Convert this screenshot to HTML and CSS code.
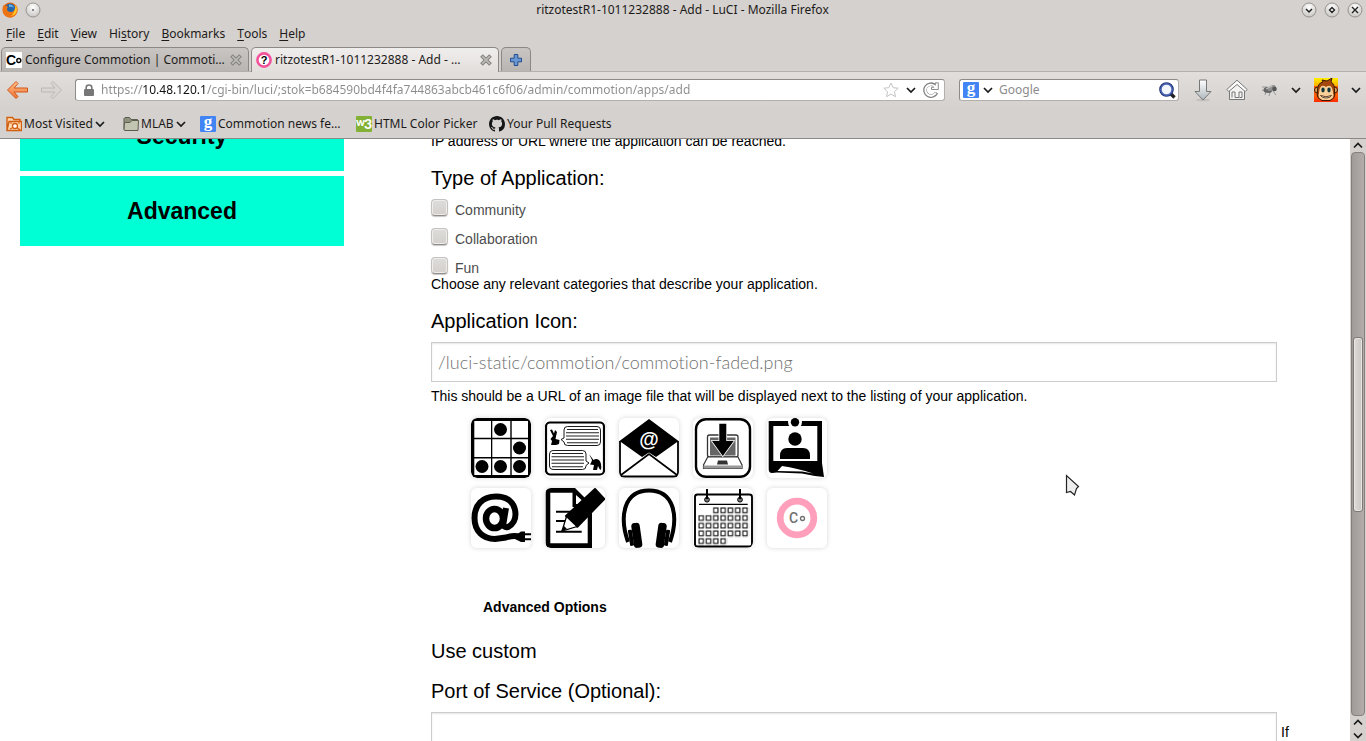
FILE: index.html
```
<!DOCTYPE html>
<html lang="en">
<head>
<meta charset="utf-8">
<title>ritzotestR1-1011232888 - Add - LuCI</title>
<link rel="stylesheet" href="styles.css">
</head>
<body>
<svg class="defs" aria-hidden="true">
  <defs>
    <radialGradient id="orb" cx=".5" cy=".3" r=".7"><stop offset="0" stop-color="#fff"/><stop offset="1" stop-color="#c9c6c3"/></radialGradient>
    <linearGradient id="orange" x2="0" y2="1"><stop offset="0" stop-color="#ffc08a"/><stop offset="1" stop-color="#f07030"/></linearGradient>
    <linearGradient id="silver" x2="0" y2="1"><stop offset="0" stop-color="#fff"/><stop offset="1" stop-color="#aeb6bb"/></linearGradient>
    <linearGradient id="flame" x2="0" y2="1"><stop offset="0" stop-color="#ffef00"/><stop offset="1" stop-color="#ff2a00"/></linearGradient>
    <pattern id="days" x="5" y="19" width="7.3" height="7.7" patternUnits="userSpaceOnUse"><rect x="1" y="1" width="4.4" height="4.6" fill="#fff" stroke="#111" stroke-width="1.1"/></pattern>
    <symbol id="chev" viewBox="0 0 10 10"><path d="M1 3 5 7 9 3" fill="none" stroke="#1a1a1a" stroke-width="1.7"/></symbol>
    <symbol id="cross" viewBox="0 0 12 12"><path d="M1.500 1.500 10.500 10.500M10.500 1.500 1.500 10.500" stroke="#82807d" stroke-width="3.800"/><path d="M2.100 2.100 9.900 9.900M9.900 2.100 2.100 9.900" stroke="#bdbab7" stroke-width="1.600"/></symbol>
    <symbol id="goog" viewBox="0 0 16 16"><rect width="16" height="16" rx="1" fill="#4284f4"/><text x="8" y="11" text-anchor="middle" font-family="Liberation Serif, serif" font-weight="bold" font-size="17" fill="#fff">g</text></symbol>
  </defs>
</svg>
<div class="window">
  <header class="chrome">
    <div class="titlebar">
      <div class="title-left">
        <svg width="16" height="16" viewBox="0 0 16 16"><circle cx="8" cy="8" r="7.400" fill="#e8640c"/><circle cx="8.200" cy="6.600" r="5.200" fill="#2467ab"/><path d="M7 2.500Q11 2 12 6Q10 4 7 5z" fill="#65b4e8"/><path d="M1 4Q2 2 3 4Q4 3.600 6 4.500L5 7Q5 10 9 10Q12 10 13.200 6Q14.500 3 13 1.800Q17 6 15 11Q12 16 7 15.400Q1 14 .6 9Q.5 6 1 4z" fill="#ed7412"/><path d="M13.500 3Q16 7 14 11Q12 14 9 14Q13 11 13.500 3z" fill="#ffc928"/></svg>
        <svg width="16" height="16" viewBox="0 0 16 16"><circle cx="8" cy="8" r="7" fill="url(#orb)" stroke="#8f8c89" stroke-width=".9"/><circle cx="8" cy="8" r=".9" fill="#555"/></svg>
      </div>
      <div class="title-text">ritzotestR1-1011232888 - Add - LuCI - Mozilla Firefox</div>
      <div class="title-right">
        <button class="plain" aria-label="Minimize"><svg width="16" height="16" viewBox="0 0 16 16"><circle cx="8" cy="8" r="7" fill="url(#orb)" stroke="#8f8c89" stroke-width=".9"/><path d="M5 7 8 10 11 7" fill="none" stroke="#222" stroke-width="1.500"/></svg></button>
        <button class="plain" aria-label="Maximize"><svg width="16" height="16" viewBox="0 0 16 16"><circle cx="8" cy="8" r="7" fill="url(#orb)" stroke="#8f8c89" stroke-width=".9"/><path d="M8 5.500 10.500 8 8 10.500 5.500 8z" fill="none" stroke="#222" stroke-width="1.400"/></svg></button>
        <button class="plain" aria-label="Close"><svg width="16" height="16" viewBox="0 0 16 16"><circle cx="8" cy="8" r="7" fill="url(#orb)" stroke="#8f8c89" stroke-width=".9"/><path d="M5 5 11 11M11 5 5 11" stroke="#222" stroke-width="1.400"/></svg></button>
      </div>
    </div>
    <nav class="menubar">
      <button class="plain"><u>F</u>ile</button>
      <button class="plain"><u>E</u>dit</button>
      <button class="plain"><u>V</u>iew</button>
      <button class="plain">Hi<u>s</u>tory</button>
      <button class="plain"><u>B</u>ookmarks</button>
      <button class="plain"><u>T</u>ools</button>
      <button class="plain"><u>H</u>elp</button>
    </nav>
    <div class="tabs">
      <div class="tab">
        <svg width="16" height="16" viewBox="0 0 16 16"><rect width="16" height="16" fill="#fff"/><text x="0" y="13" font-family="Liberation Sans, sans-serif" font-weight="bold" font-size="14">C</text><circle cx="12.800" cy="8.500" r="2" fill="#fff" stroke="#000" stroke-width="1.400"/></svg>
        <span class="tab-name">Configure Commotion | Commoti…</span>
        <button class="plain" aria-label="Close tab"><svg width="12" height="12"><use href="#cross"/></svg></button>
      </div>
      <div class="tab active">
        <svg width="16" height="16" viewBox="0 0 16 16"><circle cx="8" cy="8" r="6.600" fill="#fff" stroke="#f4529a" stroke-width="2.600"/><text x="8" y="12" text-anchor="middle" font-family="Liberation Sans, sans-serif" font-weight="bold" font-size="11">?</text></svg>
        <span class="tab-name">ritzotestR1-1011232888 - Add - …</span>
        <button class="plain" aria-label="Close tab"><svg width="12" height="12"><use href="#cross"/></svg></button>
      </div>
      <button class="newtab" aria-label="New tab"><svg width="12" height="12" viewBox="0 0 12 12"><path d="M4.200 .5h3.600v3.700h3.700v3.600H7.800v3.700H4.200V7.800H.5V4.200h3.700z" fill="#6a97d2" stroke="#204d90"/></svg></button>
    </div>
    <div class="toolbar">
      <div class="history">
        <button class="plain" aria-label="Back"><svg width="23" height="20" viewBox="0 0 23 20"><path d="M10 1.500 1.500 10 10 18.500 12 16.500 8 12H21.500V8H8L12 3.500z" fill="url(#orange)" stroke="#d0581c" stroke-linejoin="round"/></svg></button>
        <button class="plain" aria-label="Forward"><svg width="23" height="20" viewBox="0 0 23 20"><path d="M13 1.500 21.500 10 13 18.500 11 16.500 15 12H1.500V8H15L11 3.500z" fill="#d8d5d2" stroke="#bbb8b5" stroke-linejoin="round"/></svg></button>
      </div>
      <div class="box urlbox">
        <svg width="10" height="12" viewBox="0 0 10 12"><path d="M2.200 6V3.500a2.800 2.500 0 0 1 5.600 0V6" fill="none" stroke="#777" stroke-width="1.600"/><rect y="5" width="10" height="7" rx="1" fill="#777"/></svg>
        <input class="url" type="text" aria-label="Address" value="https://10.48.120.1/cgi-bin/luci/;stok=b684590bd4f4fa744863abcb461c6f06/admin/commotion/apps/add">
        <svg width="16" height="16" viewBox="0 0 16 16"><path d="M8 1 10.100 5.700 15.200 6.200 11.400 9.600 12.500 14.700 8 12 3.500 14.700 4.600 9.600 .8 6.200 5.900 5.700z" fill="#fff" stroke="#c4c4c4" stroke-linejoin="round"/></svg>
        <svg width="10" height="10"><use href="#chev"/></svg>
        <button class="plain" aria-label="Reload"><svg width="16" height="16" viewBox="0 0 16 16"><path d="M13.500 10.500A6 6 0 1 1 11.800 3.500" fill="none" stroke="#808080" stroke-width="3.600"/><path d="M15.300 .8V7.500H8.500V5.200H11L12.300 3.300V.8z" fill="#fff" stroke="#808080" stroke-width=".9"/><path d="M12.800 10.700A5.500 5.500 0 1 1 11.500 4L13 5.500" fill="none" stroke="#fff" stroke-width="1.900"/></svg></button>
      </div>
      <div class="box searchbox">
        <svg width="16" height="16"><use href="#goog"/></svg>
        <svg width="10" height="10"><use href="#chev"/></svg>
        <input class="search" type="text" aria-label="Search" placeholder="Google">
        <svg width="17" height="17" viewBox="0 0 17 17"><path d="M10.500 10.500 15.500 15.500" stroke="#222" stroke-width="3.400"/><circle cx="7.500" cy="7.500" r="5.600" fill="#fff" stroke="#1c2c70" stroke-width="3.400"/><circle cx="7.500" cy="7.500" r="5.600" fill="#f2f5fc" stroke="#4a66b8" stroke-width="1.600"/></svg>
      </div>
      <div class="actions">
        <button class="plain" aria-label="Downloads"><svg width="20" height="23" viewBox="0 0 20 23"><ellipse cx="10" cy="21" rx="7" ry="1.500" fill="#c3c0bd"/><path d="M6.500 1h7v11.500h4.500L10 21 2 12.500h4.500z" fill="url(#silver)" stroke="#777" stroke-linejoin="round"/></svg></button>
        <button class="plain" aria-label="Home"><svg width="22" height="22" viewBox="0 0 22 22"><path d="M3.500 11V20.500H18.500V11L11 4.500z" fill="#f4f3f2" stroke="#777"/><path d="M11 1.200 .8 10.500 2.800 12.500 11 5.500 19.200 12.500 21.200 10.500z" fill="#fbfbfb" stroke="#777" stroke-linejoin="round"/><path d="M6 18.500V13h3v5.500h4V13h3v5.500h-2.500" fill="none" stroke="#777"/></svg></button>
        <button class="plain" aria-label="Firebug"><svg width="17" height="14" viewBox="0 0 17 14"><path d="M1 4H6L4 12M1 7 5 8M9 9 8 13M12 8 15 12" fill="none" stroke="#999"/><ellipse cx="7" cy="7" rx="4.500" ry="3" fill="#666"/><ellipse cx="10.500" cy="5" rx="4.500" ry="2.500" fill="#929292" transform="rotate(-20 10.500 5)"/><circle cx="13.500" cy="6" r="2.300" fill="#555"/><path d="M5 6 11 3" stroke="#ccc"/></svg></button>
        <svg width="10" height="10"><use href="#chev"/></svg>
        <button class="plain" aria-label="Greasemonkey"><svg width="24" height="24" viewBox="0 0 24 24"><rect width="24" height="24" fill="url(#flame)"/><path d="M0 8H5V17H0M20 8H24V17H20" fill="#ff5a00"/><circle cx="3.500" cy="12" r="3" fill="#dd9c50" stroke="#3a1804"/><circle cx="20.500" cy="12" r="3" fill="#dd9c50" stroke="#3a1804"/><path d="M3.500 14Q3 5 9 4L8 2 13 3 18 0 17 4Q21 6 20.500 14Q22 20 16 22.500H8Q2 20 3.500 14z" fill="#a4480c" stroke="#3a1804"/><path d="M6 10Q8 6 12 9Q16 6 18 10Q19 13 19 15Q21 20 15.500 22H8.500Q3 20 5 15Q5 12 6 10z" fill="#f7d097"/><ellipse cx="9" cy="12" rx="1.700" ry="2.400" fill="#10343c"/><ellipse cx="15" cy="12" rx="1.700" ry="2.400" fill="#10343c"/><path d="M6.500 17.500Q12 20 17.500 17.500Q16 20 12 20Q8 20 6.500 17.500z" fill="#fff" stroke="#3a1804" stroke-width=".8"/></svg></button>
        <svg width="10" height="10"><use href="#chev"/></svg>
      </div>
    </div>
    <div class="bookmarks">
      <button class="plain mark"><svg width="16" height="16" viewBox="0 0 16 16"><path d="M1 14.500V1.500H6.500L8 3.500H14V6M1 14.500 3 5.500H15.500V14.500z" fill="#ffd9ad" stroke="#d25f10" stroke-width="1.400"/><circle cx="9" cy="10" r="2.500" fill="#fff" stroke="#d25f10" stroke-width="1.300"/><path d="M4 13 7 11.500M11 11.500 14 14M4 7H6M12 7H14" stroke="#d25f10" stroke-width="1.200"/></svg><span>Most Visited</span><svg width="10" height="10"><use href="#chev"/></svg></button>
      <button class="plain mark"><svg width="16" height="16" viewBox="0 0 16 16"><path d="M1 13.500V2.500L2 1.500H6.500L8 3.500H14.500V5" fill="#8d927c" stroke="#5c5d4e"/><path d="M1 14 1.500 6.500H7L9 4.500H15.500L15 14.500H1.500z" fill="#c2c5b2" stroke="#5c5d4e"/></svg><span>MLAB</span><svg width="10" height="10"><use href="#chev"/></svg></button>
      <a class="mark" href="#"><svg width="16" height="16"><use href="#goog"/></svg><span>Commotion news fe…</span></a>
      <a class="mark" href="#"><svg width="16" height="16" viewBox="0 0 16 16"><rect width="16" height="16" rx="1" fill="#83b135"/><text x="0" y="10" font-family="Lato, sans-serif" font-weight="900" font-size="11" fill="#fff">w</text><text x="8" y="13" font-family="Lato, sans-serif" font-weight="900" font-size="14" fill="#fff">3</text></svg><span>HTML Color Picker</span></a>
      <a class="mark" href="#"><svg width="16" height="16" viewBox="0 0 16 16"><path fill="#161616" d="M8 0C3.580 0 0 3.580 0 8c0 3.540 2.290 6.530 5.470 7.590.4.070.55-.17.55-.38 0-.19-.01-.82-.01-1.490-2.010.37-2.530-.49-2.690-.94-.09-.23-.48-.94-.82-1.130-.28-.15-.68-.52-.01-.53.63-.01 1.080.58 1.230.82.72 1.210 1.870.87 2.330.66.07-.52.28-.87.51-1.070-1.780-.2-3.640-.89-3.640-3.950 0-.87.31-1.590.82-2.150-.08-.2-.36-1.020.08-2.120 0 0 .67-.21 2.200.82.64-.18 1.320-.27 2-.27s1.360.09 2 .27c1.530-1.040 2.200-.82 2.200-.82.44 1.100.16 1.920.08 2.120.51.56.82 1.270.82 2.150 0 3.070-1.870 3.750-3.650 3.950.29.25.54.73.54 1.480 0 1.070-.01 1.930-.01 2.200 0 .21.15.46.55.38A8 8 0 0 0 16 8c0-4.420-3.580-8-8-8z"/></svg><span>Your Pull Requests</span></a>
    </div>
  </header>
  <div class="viewport">
    <div class="page">
      <aside class="side">
        <a class="side-link" href="#">Security</a>
        <a class="side-link" href="#">Advanced</a>
      </aside>
      <main class="form">
        <p class="hint">IP address or URL where the application can be reached.</p>
        <h2 class="label">Type of Application:</h2>
        <div class="checks">
          <label class="check"><input type="checkbox"><span>Community</span></label>
          <label class="check"><input type="checkbox"><span>Collaboration</span></label>
          <label class="check"><input type="checkbox"><span>Fun</span></label>
        </div>
        <p class="hint tight">Choose any relevant categories that describe your application.</p>
        <label class="label" for="icon">Application Icon:</label>
        <div class="field"><input class="text" id="icon" type="text" placeholder="/luci-static/commotion/commotion-faded.png"></div>
        <p class="hint">This should be a URL of an image file that will be displayed next to the listing of your application.</p>
        <div class="icons">
          <button class="pick" aria-label="Game"><svg viewBox="0 0 60 60"><rect width="60" height="60" rx="6"/><path d="M3.300 3H20V19.700H3.300zM21.300 3H39.300V19.700H21.300zM40.700 3H57V19.700H40.700zM3.300 21.200H20V39H3.300zM21.300 21.200H39.300V39H21.300zM40.700 21.200H57V39H40.700zM3.300 40.500H20V57H3.300zM21.300 40.500H39.300V57H21.300zM40.700 40.500H57V57H40.700z" fill="#fff"/><circle cx="29.500" cy="11.500" r="6.500"/><circle cx="48.500" cy="30" r="6.500"/><circle cx="11" cy="48.500" r="6.500"/><circle cx="29.500" cy="48.500" r="6.500"/><circle cx="48.500" cy="48.500" r="6.500"/></svg></button>
          <button class="pick" aria-label="Chat"><svg viewBox="0 0 60 60"><rect x="1" y="4.500" width="58" height="52" rx="4" fill="none" stroke="#000" stroke-width="2.200"/><g fill="#fff" stroke="#000" stroke-width=".9"><path d="M22.500 8.500H52Q55.500 8.500 55.500 12V24Q55.500 27.500 52 27.500H22.500Q19 27.500 19 24L16 21.500 19 20V12Q19 8.500 22.500 8.500z"/><path d="M8 32.500H37.500Q41 32.500 41 36V43L44 45 41 47.500V48Q41 51.500 37.500 51.500H8Q4.500 51.500 4.500 48V36Q4.500 32.500 8 32.500z"/></g><path d="M22 11.500H53M21 14.800H54M21 18H54M21 21.300H54M22 24.700H53M7 35.500H38M6.500 38.700H39M6.500 42H39M6.500 45.300H39M7 48.700H38" stroke="#222" stroke-width="1.100"/><path d="M5 12 7 11.500 9 15.500 10 12 12 14 11 18.500 10.500 21 14.500 22 14 26 11 27H6L7 23 5.500 21 8 18z"/><path d="M44 36 48.500 42Q51 40 54 42Q57 45 56 52Q54 51 53 48L52 52H48L49 47 45 46.500Q47 43 47 42z"/></svg></button>
          <button class="pick" aria-label="Mail"><svg viewBox="0 0 60 60"><path d="M1 23V55Q1 58.500 4 58.500H56Q59 58.500 59 55V23M2 57 30 36 58 57" fill="none" stroke="#000" stroke-width="1.800"/><path d="M30 1 59.500 23 37 39 30 34.500 23 39 .5 23z"/><text x="30" y="27.500" text-anchor="middle" font-family="Liberation Sans, sans-serif" font-weight="bold" font-size="20" fill="#fff">@</text></svg></button>
          <button class="pick" aria-label="Download"><svg viewBox="0 0 60 60"><rect x="3" y="1.200" width="54" height="57.600" rx="10" fill="#fff" stroke="#000" stroke-width="2.400"/><rect x="14.500" y="17" width="30.500" height="22" rx="2" fill="#fff" stroke="#333" stroke-width="1.300"/><rect x="17" y="19.500" width="25.500" height="18" fill="#666"/><path d="M14.700 39H45L49 47V50.500H10.500V47z" fill="#fff" stroke="#333" stroke-width="1.200"/><path d="M10.500 47.500H49V50.500H10.500z" fill="#999"/><path d="M25 42.500H34L35 46.500H24z" fill="#333"/><path d="M26.300 5.700H33.300V23H40.700L29.800 38 19 23H26.300z" stroke="#fff" stroke-width="1.600" paint-order="stroke"/></svg></button>
          <button class="pick" aria-label="Board"><svg viewBox="0 0 60 60"><path d="M1.700 3H55V45L57 59Q46 58 35 55.500L10 54.500 5 55Q1.700 55 1.700 51z"/><path d="M6.300 8H50.300V43H6.300zM10.500 53 15 48Q30 50 46 55.500L35 53.500z" fill="#fff"/><circle cx="28" cy="4" r="7" fill="#fff"/><circle cx="28" cy="4.200" r="4.200"/><circle cx="28" cy="21" r="6.700"/><path d="M13 41V38Q13 30 20 30H36Q43 30 43 38V41z"/></svg></button>
          <button class="pick" aria-label="Hosting"><svg viewBox="0 0 60 60"><path d="M35 20 32.500 35Q32 40 37 39Q44.500 35 44.500 26C44 14 36 8.500 25 8.500C11.500 8.500 3.500 17 3.500 30C3.500 43 12 51 24 51L35 49.500Q43 47 49 48.800" fill="none" stroke="#000" stroke-width="6"/><ellipse cx="23.500" cy="30.500" rx="8.500" ry="9.500" fill="none" stroke="#000" stroke-width="6.500"/><path d="M45 47 50 43.500H54V54H50L44 51z"/><path d="M54 46.300H60M54 51.300H60" stroke="#000" stroke-width="2"/></svg></button>
          <button class="pick" aria-label="Editor"><svg viewBox="0 0 60 60"><path d="M5 0H30L47 17V60H5Q.7 60 .7 56V4Q.7 0 5 0z"/><path d="M5.300 4.700H27.500V19H42.700V55.300H5.300z" fill="#fff"/><path d="M31 7 41 16H31z" fill="#fff"/><path d="M11 23.700H30M11 33H25M11 43.700H36.700" stroke="#000" stroke-width="2"/><path d="M50 1 59.300 11 32.300 38.700 21 28z" stroke="#000" stroke-width="2" stroke-linejoin="round"/><path d="M21.500 28.500 32 38.500 17 43z" fill="#fff" stroke="#000" stroke-width="1.300"/><path d="M19 38 22 41 16 43.500z"/></svg></button>
          <button class="pick" aria-label="Audio"><svg viewBox="0 0 60 60"><path d="M9 54C0 28 5 2.500 30 2.500S60 28 51 54" fill="none" stroke="#000" stroke-width="4"/><g id="pad"><rect x="13.500" y="35" width="8.500" height="25" rx="3.500" transform="rotate(-8 17 47)"/><rect x="10" y="42" width="4" height="16" rx="1" transform="rotate(-9 11 50)"/></g><use href="#pad" transform="matrix(-1 0 0 1 60 0)"/></svg></button>
          <button class="pick" aria-label="Calendar"><svg viewBox="0 0 60 60"><rect x="2" y="6.500" width="57" height="52" rx="2.500" fill="#fff" stroke="#000" stroke-width="1.900"/><path d="M6 16.300H54.700" stroke="#000" stroke-width="1.300"/><circle cx="14" cy="11.700" r="2.400" fill="#777" stroke="#000"/><circle cx="47" cy="11.700" r="2.400" fill="#777" stroke="#000"/><path d="M14 1V11M47 1V11" stroke="#000" stroke-width="2"/><path d="M19.600 19H56.100V49.800H34.200V57.500H5V26.700H19.600z" fill="url(#days)"/></svg></button>
          <button class="pick" aria-label="Commotion"><svg viewBox="0 0 60 60"><circle cx="30" cy="30" r="16.800" fill="#fff" stroke="#ff9fbb" stroke-width="6.800"/><text x="22" y="35" font-family="Roboto, sans-serif" font-weight="500" font-size="14" fill="#707070">C</text><circle cx="35.500" cy="30.500" r="2" fill="#fff" stroke="#707070" stroke-width="1.300"/></svg></button>
        </div>
        <h3 class="section">Advanced Options</h3>
        <h2 class="label custom">Use custom</h2>
        <label class="label port" for="port">Port of Service (Optional):</label>
        <div class="field wide"><input class="text" id="port" type="text"><span class="after">If</span></div>
      </main>
    </div>
    <div class="scrollbar">
      <svg width="10" height="13" viewBox="0 0 10 13"><path d="M1 8.500 5 4.500 9 8.500" fill="none" stroke="#1a1a1a" stroke-width="1.700"/></svg>
      <div class="track"><div class="before"></div><div class="thumb"></div><div class="rest"></div></div>
      <svg width="10" height="13" viewBox="0 0 10 13"><path d="M1 8.500 5 4.500 9 8.500" fill="none" stroke="#1a1a1a" stroke-width="1.700"/></svg>
      <svg width="10" height="12" viewBox="0 0 10 12"><path d="M1 4.500 5 8.500 9 4.500" fill="none" stroke="#1a1a1a" stroke-width="1.700"/></svg>
    </div>
  </div>
</div>
<svg class="pointer" width="16" height="24" viewBox="0 0 16 24"><path d="M1.500 1.500V18.500L5.500 17.500 9.500 21 11.500 14.500 13.500 12.500z" fill="#eee" stroke="#222" stroke-width="1.200"/></svg>
</body>
</html>
```
FILE: styles.css
```
* { box-sizing: border-box; }
body { margin: 0; background: #fff; color: #000; font: 14px/16px "Liberation Sans", Arial, sans-serif; }
svg { display: block; flex: none; }
.defs { position: absolute; width: 0; height: 0; }
.window { display: flex; flex-direction: column; height: 100vh; overflow: hidden; }
.plain { display: flex; align-items: center; margin: 0; padding: 0; border: 0; background: none; color: inherit; font: inherit; }
.plain u { text-underline-offset: 2px; }

.chrome { flex: none; background: #d5d1ce; border-bottom: 1px solid #8b8986; color: #1c1b1a; font: 12px/16px "Noto Sans", sans-serif; }
.titlebar { display: grid; grid-template-columns: 1fr auto 1fr; align-items: center; height: 20px; padding: 0 3px 0 2px; }
.title-left, .title-right { display: flex; gap: 7px; }
.title-right { justify-content: flex-end; }
.menubar { display: flex; gap: 12px; height: 27px; padding: 0 6px; align-items: center; }
.tabs { display: flex; gap: 2px; height: 25px; padding: 0 1px; border-bottom: 1px solid #b3b0ad; }
.tab { display: flex; align-items: center; gap: 3px; width: 248px; height: 24px; padding: 0 6px 0 4px; border: 1px solid #8b8885; border-bottom: 0; border-radius: 5px 5px 0 0; background: linear-gradient(#c9c5c3, #b9b5b3); }
.tab.active { height: 25px; background: linear-gradient(#f0eeed, #e2dedc); }
.tab-name { flex: 1; white-space: nowrap; overflow: hidden; }
.newtab { display: flex; align-items: center; justify-content: center; width: 30px; height: 24px; padding: 0; border: 1px solid #8b8885; border-bottom: 0; border-radius: 5px 5px 0 0; background: linear-gradient(#c9c5c3, #b9b5b3); }
.toolbar { display: flex; align-items: center; height: 36px; padding: 0 5px 0 6px; background: linear-gradient(#e2dedc, #d5d1ce); }
.history { display: flex; gap: 11px; width: 69px; }
.box { display: flex; align-items: center; height: 22px; background: #fff; border: 1px solid #b3afac; border-top-color: #8d8a87; border-left-color: #8d8a87; border-radius: 3px; }
.urlbox { flex: 1; gap: 7px; padding: 0 5px 0 8px; margin-right: 14px; }
.searchbox { width: 220px; gap: 4px; padding: 0 2px 0 3px; margin-right: 14px; }
.url, .search { flex: 1; min-width: 0; padding: 0; border: 0; outline: 0; background: none; font: inherit; }
.url { font-size: 12px; color: transparent; background: linear-gradient(90deg, #8c8c8c 41px, #111 41px, #111 105px, #8c8c8c 105px); -webkit-background-clip: text; background-clip: text; }
.search { padding-left: 2px; }
.search::placeholder { color: #8c8c8c; }
.actions { display: flex; align-items: center; gap: 13px; }
.bookmarks { display: grid; grid-template-columns: 117px 77px 156px 133px auto; justify-content: start; align-items: center; height: 30px; padding: 1px 6px 0; }
.mark { display: flex; align-items: center; gap: 2px; color: inherit; text-decoration: none; white-space: nowrap; }

.viewport { flex: 1; display: flex; min-height: 0; }
.page { flex: 1; display: flex; align-items: flex-start; gap: 87px; padding: 0 60px 0 20px; overflow: hidden; }
.side { flex: none; width: 324px; display: flex; flex-direction: column; gap: 5px; margin-top: -38px; }
.side-link { display: flex; align-items: center; justify-content: center; height: 70px; background: #00ffd5; color: #000; font-size: 23px; font-weight: bold; text-decoration: none; }
.form { flex: 1; margin-top: -6px; }
.hint { margin: 6px 0 0; }
.form > .hint:first-child { margin-top: 0; }
.label { display: block; margin: 14px 0 0; font-size: 20px; font-weight: normal; line-height: 30px; }
.checks { display: flex; flex-direction: column; gap: 13px; margin-top: 9px; color: #4d4d4d; }
.check { display: flex; align-items: center; gap: 6px; height: 16px; }
.check input { appearance: none; flex: none; width: 17px; height: 17px; margin: 0 1px 5px 0; border: 1px solid #c4c1be; border-bottom-color: #8f8c89; border-radius: 4px; background: linear-gradient(#dedcda, #d3d0cd); box-shadow: inset 0 0 0 1px #efedec, 0 1px 1px #c9c7c5; }
.hint.tight { margin-top: 0; }
.field { display: flex; align-items: center; gap: 4px; margin: 6px 13px 0 0; }
.field.wide { margin-right: 0; }
.text { flex: 1; min-width: 0; height: 40px; padding: 0 6px; border: 1px solid #ccc; border-radius: 0; background: #fff; box-shadow: inset 0 1px 2px rgba(0, 0, 0, .1); font: 300 18px/24px Lato, sans-serif; font-variant-ligatures: none; }
.text::placeholder { color: #707070; }
.after { flex: none; width: 9px; }
.icons { display: grid; grid-template-columns: repeat(5, 60px); gap: 10px 14px; padding-left: 40px; margin-top: 14px; }
.pick { width: 60px; height: 60px; padding: 0; border: 0; border-radius: 6px; background: #fff; box-shadow: 0 0 5px rgba(0, 0, 0, .16); overflow: hidden; }
.section { margin: 51px 0 0 52px; font-size: 14px; line-height: 16px; }
.label.custom { margin-top: 21px; }
.label.port { margin-top: 10px; }

.scrollbar { flex: none; display: flex; flex-direction: column; align-items: center; width: 16px; background: #d5d1ce; }
.track { flex: 1; display: flex; flex-direction: column; width: 14px; padding: 0 1px; border: 1px solid #85807e; border-radius: 4px; background: linear-gradient(90deg, #a09a98, #b3acaa); }
.before { flex: 185; }
.thumb { flex: 174; border: 1px solid #7d7977; border-radius: 3px; background: linear-gradient(90deg, #dedbd9, #c9c5c3); box-shadow: inset 0 0 0 1px #e8e6e4; }
.rest { flex: 204; }
.pointer { position: absolute; left: 1065px; top: 474px; }
```
